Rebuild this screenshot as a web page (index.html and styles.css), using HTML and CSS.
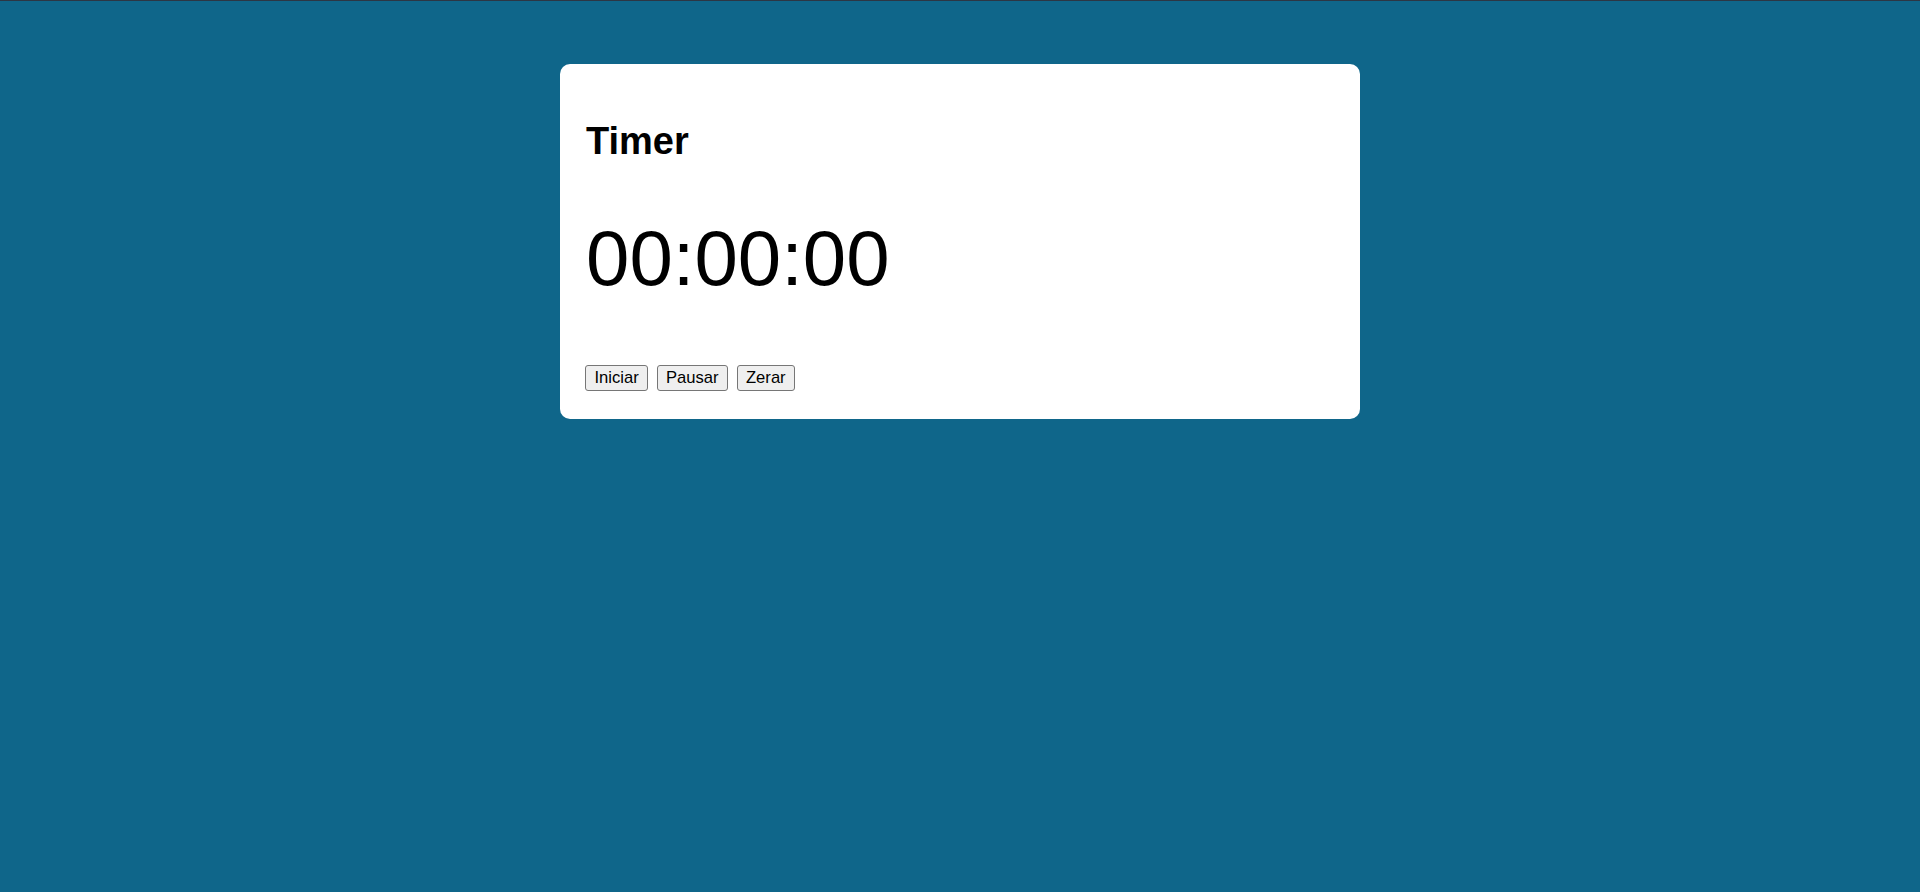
FILE: index.html
```html
<!DOCTYPE html>
<html lang="pt">
<head>
<meta charset="utf-8">
<title>Timer</title>
<link rel="stylesheet" href="styles.css">
</head>
<body>
<div class="topline"></div>
<main class="card">
  <h1 class="title">Timer</h1>
  <div class="clock">00:00:00</div>
  <div class="actions">
    <button class="btn" type="button">Iniciar</button>
    <button class="btn" type="button">Pausar</button>
    <button class="btn" type="button">Zerar</button>
  </div>
</main>
</body>
</html>
```

FILE: styles.css
```css
html, body {
  margin: 0;
  padding: 0;
}
body {
  background: #0f668a;
  font-family: "Liberation Sans", Arial, sans-serif;
  color: #000;
  min-height: 892px;
}
.topline {
  height: 1px;
  background: #2c3644;
}
.card {
  width: 800px;
  box-sizing: border-box;
  margin: 63px auto 0;
  background: #fff;
  border-radius: 10px;
  padding: 0 25px 28px;
  overflow: hidden;
}
.title {
  margin: 56px 0 0;
  font-size: 38px;
  font-weight: bold;
  line-height: normal;
  padding-left: 1px;
}
.clock {
  margin-top: 50px;
  font-size: 78px;
  line-height: normal;
  padding-left: 1px;
}
.actions {
  display: flex;
  gap: 8.6px;
  margin-top: 61px;
}
.btn {
  font-family: "Liberation Sans", Arial, sans-serif;
  font-size: 16.6px;
  line-height: normal;
  padding: 2.2px 8.4px;
  border: 1px solid #767676;
  border-radius: 3px;
  background: #efefef;
  color: #000;
  margin: 0;
}
```
